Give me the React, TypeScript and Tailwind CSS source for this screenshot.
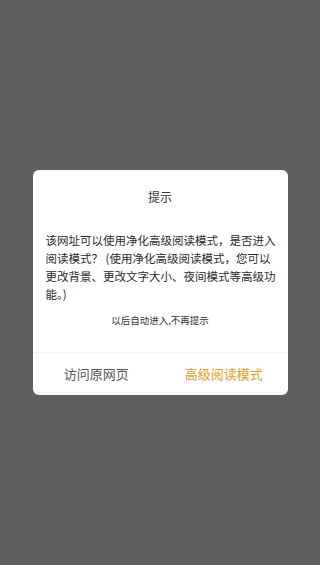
export default function App() {
  return (
    <div
      className="flex h-[565px] w-full items-center justify-center bg-[#5f5f5f]"
      style={{ fontFamily: '"Noto Sans CJK SC", "Noto Sans", sans-serif' }}
    >
      <div className="flex h-[225px] w-[255px] flex-col rounded-[6px] bg-white">
        <div className="pt-[19px] text-center text-[12px] leading-[16px] text-[#333]">提示</div>
        <p className="mt-[26px] whitespace-nowrap pl-[13px] text-[11.5px] leading-[18px] text-[#2a2a2a]">
          该网址可以使用净化高级阅读模式，是否进入
          <br />
          阅读模式？ (使用净化高级阅读模式，您可以
          <br />
          更改背景、更改文字大小、夜间模式等高级功
          <br />
          能。)
        </p>
        <div className="mt-[10px] text-center text-[9.5px] leading-[14px] text-[#333]">以后自动进入,不再提示</div>
        <div className="mt-auto flex h-[43px] border-t border-[#f4f4f4]">
          <button className="flex-1 text-[13px] text-[#555]">访问原网页</button>
          <button className="flex-1 text-[13px] text-[#f29b1f]">高级阅读模式</button>
        </div>
      </div>
    </div>
  )
}
